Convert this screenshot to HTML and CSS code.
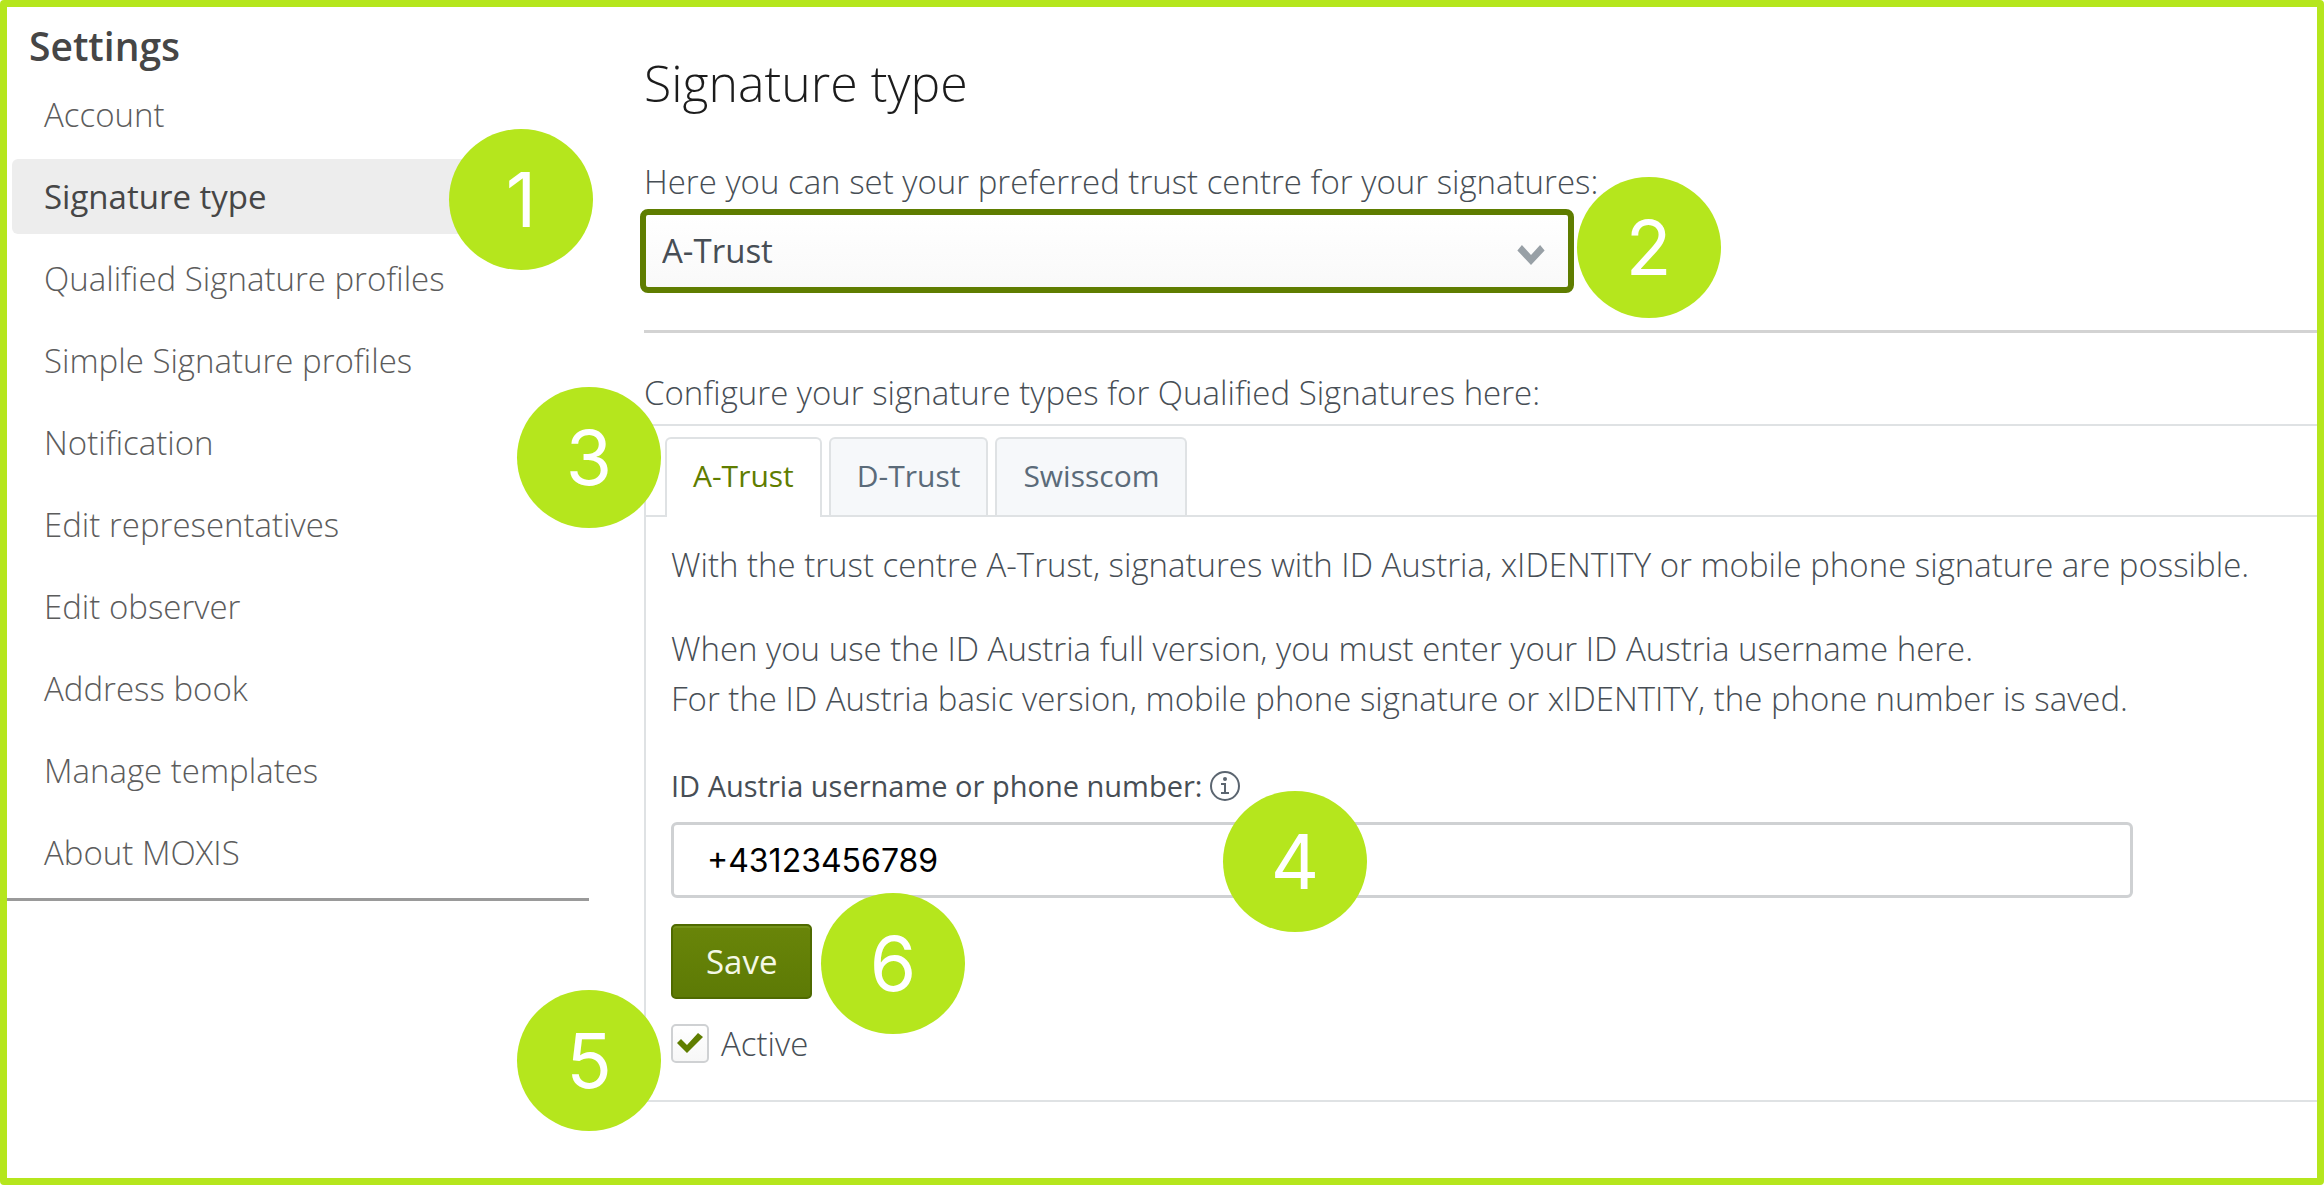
FILE: index.html
```html
<!DOCTYPE html>
<html lang="en">
<head>
	<meta charset="utf-8">
	<title>Settings - Signature type</title>
	<link rel="stylesheet" href="styles.css">
</head>
<body>
	<div class="page">
		<nav class="sidebar">
			<h2 class="sidebar-title">Settings</h2>
			<ul class="menu">
				<li><a href="#account">Account</a></li>
				<li><a href="#signature-type" class="selected">Signature type</a><span class="step step-1">1</span></li>
				<li><a href="#qualified">Qualified Signature profiles</a></li>
				<li><a href="#simple">Simple Signature profiles</a></li>
				<li><a href="#notification">Notification</a></li>
				<li><a href="#representatives">Edit representatives</a></li>
				<li><a href="#observer">Edit observer</a></li>
				<li><a href="#address-book">Address book</a></li>
				<li><a href="#templates">Manage templates</a></li>
				<li><a href="#about">About MOXIS</a></li>
			</ul>
		</nav>

		<main class="content">
			<h1>Signature type</h1>
			<label class="text" for="trust-centre">Here you can set your preferred trust centre for your signatures:</label>
			<div class="select-box">
				<select id="trust-centre">
					<option selected>A-Trust</option>
					<option>D-Trust</option>
					<option>Swisscom</option>
				</select>
				<svg class="arrow" viewBox="0 0 30 22"><path d="M0 6L5 0L15 11L25 0L30 6L15 22Z" fill="#98a0a6"/></svg>
				<span class="step step-2">2</span>
			</div>
			<hr>

			<p class="text">Configure your signature types for Qualified Signatures here:</p>
			<section class="tabsheet">
				<div class="tabs" role="tablist">
					<button type="button" role="tab" class="tab selected" aria-selected="true">A-Trust</button>
					<button type="button" role="tab" class="tab">D-Trust</button>
					<button type="button" role="tab" class="tab">Swisscom</button>
				</div>
				<span class="step step-3">3</span>

				<form class="panel">
					<p class="text">With the trust centre A-Trust, signatures with ID Austria, xIDENTITY or mobile phone signature are possible.</p>
					<p class="text note">When you use the ID Austria full version, you must enter your ID Austria username here.<br>For the ID Austria basic version, mobile phone signature or xIDENTITY, the phone number is saved.</p>

					<div class="caption">
						<label for="username">ID Austria username or phone number:</label>
						<svg class="info" viewBox="0 0 32 32" fill="none" stroke="#5b6570" stroke-width="2">
							<circle cx="16" cy="16" r="14"/>
							<path d="M12 14H16V23M12 23H20"/>
							<circle cx="16" cy="9" r="2" fill="#5b6570" stroke="none"/>
						</svg>
					</div>
					<div class="field">
						<input type="text" id="username" value="+43123456789">
						<span class="step step-4">4</span>
					</div>
					<div class="actions">
						<button type="button" class="save">Save</button>
						<span class="step step-6">6</span>
					</div>
					<div class="active">
						<input type="checkbox" id="active" checked>
						<svg class="check" viewBox="0 0 26 20"><path d="M0 10L4 6L10 12L21 0L26 4L10 20Z" fill="#5f7d00"/></svg>
						<label for="active">Active</label>
						<span class="step step-5">5</span>
					</div>
				</form>
			</section>
		</main>
	</div>
</body>
</html>
```
FILE: styles.css
```css
* {
	box-sizing: border-box;
}

body {
	margin: 0;
	background-color: #fff;
	font-family: "Open Sans", sans-serif;
	font-size: 33px;
	font-weight: 300;
	line-height: 50px;
	color: #474e55;
}

h1, h2, p, ul {
	margin: 0;
	padding: 0;
}

.page {
	display: grid;
	grid-template-columns: 582px 1fr;
	align-items: start;
	gap: 55px;
	min-height: 100vh;
	border: 7px solid #b5e61d;
	border-radius: 4px;
}

/* sidebar */
.sidebar {
	padding: 15px 0 8px;
	border-bottom: 3px solid #9a9a9a;
}

.sidebar-title {
	margin: 0 0 7px 22px;
	font-size: 39px;
	font-weight: 600;
	line-height: 48px;
	color: #464646;
}

.menu {
	display: flex;
	flex-direction: column;
	gap: 7px;
	list-style: none;
}

.menu li {
	position: relative;
	padding: 0 5px;
}

.menu a {
	display: block;
	padding: 0 32px;
	border-radius: 6px;
	line-height: 75px;
	text-decoration: none;
	white-space: nowrap;
	color: #5c5c5c;
}

.menu a.selected {
	margin-right: 36px;
	background-color: #ededed;
	font-weight: 400;
	color: #464646;
}

/* numbered steps */
.step {
	position: absolute;
	width: 144px;
	height: 141px;
	border-radius: 50%;
	background-color: #b5e61d;
	font-family: Inter, sans-serif;
	font-size: 75px;
	font-weight: 400;
	line-height: 141px;
	text-align: center;
	color: #fff;
}

.step-1 {
	top: -30px;
	right: -4px;
}

.step-2 {
	top: -32px;
	left: calc(100% + 3px);
}

.step-3 {
	top: -39px;
	left: -129px;
}

.step-4 {
	top: -31px;
	left: 552px;
}

.step-5 {
	top: -34px;
	left: -154px;
}

.step-6 {
	top: -31px;
	left: 150px;
}

/* content */
.content {
	padding-top: 40px;
}

h1 {
	margin-bottom: 38px;
	font-size: 50px;
	font-weight: 300;
	line-height: 72px;
	color: #1c1c1c;
}

.text {
	display: block;
}

.select-box {
	position: relative;
	width: 55.8%;
	margin: 2px 0 37px -4px;
}

.select-box select {
	display: block;
	width: 100%;
	height: 84px;
	padding: 0 16px;
	border: 6px solid #5f7d00;
	border-radius: 8px;
	outline: none;
	appearance: none;
	background: linear-gradient(#fff, #f9f9f9);
	font: inherit;
	font-weight: 400;
	color: #474e55;
}

.arrow {
	position: absolute;
	top: 36px;
	right: 28px;
	width: 30px;
	height: 20px;
	pointer-events: none;
}

hr {
	height: 3px;
	margin: 0 0 35px;
	border: 0;
	background-color: #d3d3d3;
}

.tabsheet {
	position: relative;
	margin-top: 6px;
	border: 2px solid #dfe2e4;
	border-right: 0;
}

.tabs {
	display: flex;
	gap: 7px;
	padding: 11px 19px 0;
	border-bottom: 2px solid #dfe2e4;
}

.tab {
	height: 78px;
	padding: 0 26px 2px;
	border: 2px solid #dfe2e4;
	border-bottom: 0;
	border-radius: 6px 6px 0 0;
	background-color: #f6f8fa;
	font: inherit;
	font-size: 30px;
	font-weight: 400;
	color: #5b6b79;
}

.tab.selected {
	height: 80px;
	margin-bottom: -2px;
	padding-bottom: 4px;
	background-color: #fff;
	color: #5f7d00;
}

.panel {
	padding: 23px 25px 37px;
}

.note {
	margin: 34px 0 37px;
}

.caption {
	display: flex;
	align-items: center;
	gap: 7px;
	margin-bottom: 11px;
	font-size: 29px;
	font-weight: 400;
}

.info {
	width: 32px;
	height: 32px;
}

.field {
	position: relative;
	width: 90.2%;
	margin-bottom: 26px;
}

.field input {
	display: block;
	width: 100%;
	height: 76px;
	padding: 0 33px;
	border: 3px solid #cfd1d3;
	border-radius: 6px;
	background-color: #fff;
	font-family: Inter, sans-serif;
	font-size: 32px;
	color: #000;
}

.actions {
	position: relative;
	margin-bottom: 25px;
}

.save {
	display: block;
	height: 75px;
	padding: 0 33px;
	border: 2px solid #4f6a00;
	border-radius: 5px;
	background: linear-gradient(#698509, #5d7a05);
	box-shadow: inset 0 2px 0 #75931a;
	font: inherit;
	font-weight: 400;
	color: #f4f8e6;
}

.active {
	position: relative;
	display: flex;
	align-items: center;
	gap: 12px;
	height: 39px;
}

.active input {
	width: 38px;
	height: 39px;
	margin: 0;
	border: 2px solid #cfd1d3;
	border-radius: 5px;
	appearance: none;
	background: linear-gradient(#fff, #f7f7f7);
}

.check {
	position: absolute;
	top: 9px;
	left: 6px;
	width: 26px;
	height: 20px;
	pointer-events: none;
}
```
